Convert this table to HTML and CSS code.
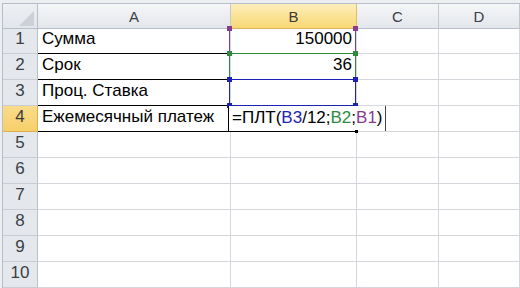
FILE: index.html
```html
<!DOCTYPE html>
<html lang="ru">
<head>
<meta charset="utf-8">
<title>Excel</title>
<link rel="stylesheet" href="styles.css">
</head>
<body>
<div class="wrap">
  <div class="sheet">
    <div class="corner"><svg class="tri" width="16" height="15" viewBox="0 0 16 15"><polygon points="15,0 15,15 0,15" fill="#cdd1d7"/></svg></div>
    <div class="ch">A</div>
    <div class="ch sel">B</div>
    <div class="ch">C</div>
    <div class="ch">D</div>

    <div class="rh">1</div>
    <div class="c ba">Сумма</div>
    <div class="c num">150000</div>
    <div class="c"></div>
    <div class="c"></div>

    <div class="rh">2</div>
    <div class="c ba">Срок</div>
    <div class="c num">36</div>
    <div class="c"></div>
    <div class="c"></div>

    <div class="rh">3</div>
    <div class="c ba">Проц. Ставка</div>
    <div class="c"></div>
    <div class="c"></div>
    <div class="c"></div>

    <div class="rh rsel">4</div>
    <div class="c ba">Ежемесячный платеж</div>
    <div class="c"></div>
    <div class="c"></div>
    <div class="c"></div>

    <div class="rh">5</div><div class="c"></div><div class="c"></div><div class="c"></div><div class="c"></div>
    <div class="rh">6</div><div class="c"></div><div class="c"></div><div class="c"></div><div class="c"></div>
    <div class="rh">7</div><div class="c"></div><div class="c"></div><div class="c"></div><div class="c"></div>
    <div class="rh">8</div><div class="c"></div><div class="c"></div><div class="c"></div><div class="c"></div>
    <div class="rh">9</div><div class="c"></div><div class="c"></div><div class="c"></div><div class="c"></div>
    <div class="rh">10</div><div class="c"></div><div class="c"></div><div class="c"></div><div class="c"></div>
  </div>

  <div class="rng r-pur"><i class="h tl"></i><i class="h tr"></i><i class="h bl"></i><i class="h br"></i></div>
  <div class="rng r-grn"><i class="h tl"></i><i class="h tr"></i><i class="h bl"></i><i class="h br"></i></div>
  <div class="rng r-blu"><i class="h tl"></i><i class="h tr"></i><i class="h bl"></i><i class="h br"></i></div>

  <div class="editor">=ПЛТ(<span class="kb">B3</span>/12;<span class="kg">B2</span>;<span class="kp">B1</span>)</div>
  <div class="active-bottom"><i class="fill"></i></div>
</div>
</body>
</html>
```

FILE: styles.css
```css
* { box-sizing: border-box; }
html, body { margin: 0; padding: 0; background: #ffffff; }
body { width: 520px; height: 288px; overflow: hidden; font-family: "Liberation Sans", Arial, sans-serif; }

.wrap {
  position: relative;
  width: 520px;
  height: 288px;
  padding: 3px 0 0 2px;
  background: #eceef1;
}

.sheet {
  display: grid;
  grid-template-columns: 35px 193px 126px 82px 1fr;
  grid-template-rows: 25px 25px repeat(9, 26px);
  border-top: 1px solid #b8bec8;
  border-left: 1px solid #b8bec8;
  background: #ffffff;
  width: 518px;
}

.corner {
  background: linear-gradient(#eef0f3, #e2e5ea);
  border-right: 1px solid #b9bfc8;
  border-bottom: 1px solid #b9bfc8;
  display: flex;
  align-items: flex-end;
  justify-content: flex-end;
  padding: 0 2px 2px 0;
}

.ch {
  background: linear-gradient(#f5f6f8, #e3e6eb);
  border-right: 1px solid #c3c8d0;
  border-bottom: 1px solid #b9bfc8;
  color: #3a3f46;
  font-size: 15px;
  display: flex;
  align-items: center;
  justify-content: center;
  padding-top: 1px;
}
.ch.sel {
  background: linear-gradient(#fdefbd 0%, #fbe49a 45%, #f9d774 100%);
  border-right: 1px solid #e0bd63;
  border-bottom: 1px solid #d9b45a;
  color: #3a3a3a;
}

.rh {
  background: #e4e7ec;
  border-right: 1px solid #b9bfc8;
  border-bottom: 1px solid #c8cdd4;
  color: #3a3f46;
  font-size: 17px;
  display: flex;
  align-items: flex-end;
  justify-content: center;
  padding-bottom: 4px;
}
.rh.rsel {
  background: linear-gradient(#f9dc8a, #f6cf6a);
  border-right: 1px solid #dcae4c;
  border-bottom: 1px solid #dcae4c;
  color: #3a3a3a;
}

.c {
  border-right: 1px solid #d4d7dc;
  border-bottom: 1px solid #d4d7dc;
  font-size: 17px;
  color: #000;
  display: flex;
  align-items: flex-end;
  padding: 0 4px 4px 4px;
  white-space: nowrap;
}
.c.ba { border-bottom-color: #000; }
.c.num { justify-content: flex-end; }

/* formula reference ranges */
.rng {
  position: absolute;
  left: 229px;
  width: 127px;
  border: 1px solid;
}
.r-pur { top: 28px; height: 26px; border-color: #8a3b8f; color: #8a3b8f; border-top-color: transparent; }
.r-grn { top: 53px; height: 27px; border-color: #2f8a3c; color: #2f8a3c; }
.r-blu { top: 79px; height: 27px; border-color: #1b22b8; color: #1b22b8; }

.h {
  position: absolute;
  width: 5px;
  height: 5px;
  background: currentColor;
}
.h.tl { left: -3px; top: -3px; }
.h.tr { right: -3px; top: -3px; }
.h.bl { left: -3px; bottom: -3px; }
.h.br { right: -3px; bottom: -3px; }

.editor {
  position: absolute;
  left: 228px;
  top: 106px;
  width: 158px;
  height: 25px;
  background: #fff;
  border-left: 1px solid #000;
  border-right: 1px solid #444;
  font-size: 17px;
  color: #000;
  padding: 0 0 0 3px;
  display: flex;
  align-items: flex-end;
  padding-bottom: 3px;
  white-space: nowrap;
}
.kb { color: #2323b4; }
.kg { color: #2e8b3e; }
.kp { color: #8a3b8f; }

.active-bottom {
  position: absolute;
  left: 228px;
  top: 131px;
  width: 128px;
  height: 1px;
  background: #000;
}
.fill {
  position: absolute;
  right: -2px;
  top: -1px;
  width: 3px;
  height: 3px;
  background: #000;
}
```
